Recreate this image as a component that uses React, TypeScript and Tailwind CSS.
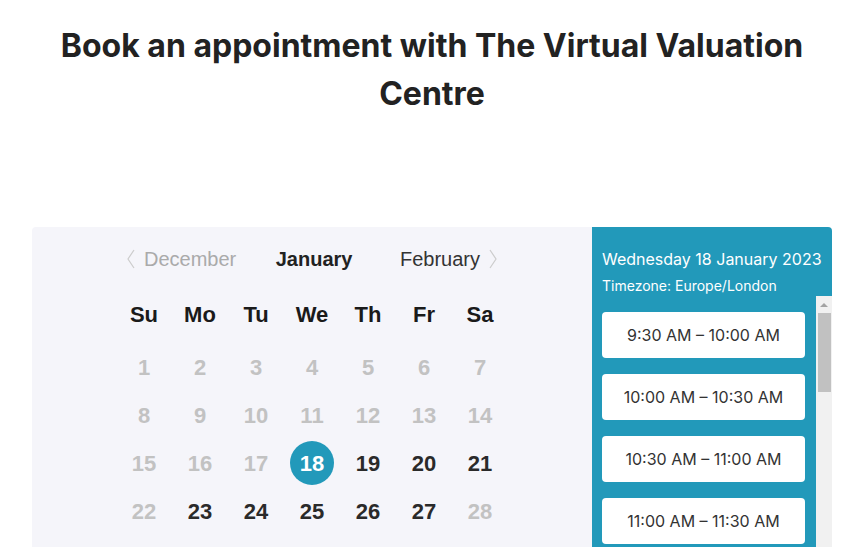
import React from "react";

const weeks: { d: number; muted?: boolean; selected?: boolean }[][] = [
  [1, 2, 3, 4, 5, 6, 7].map((d) => ({ d, muted: true })),
  [8, 9, 10, 11, 12, 13, 14].map((d) => ({ d, muted: true })),
  [
    { d: 15, muted: true },
    { d: 16, muted: true },
    { d: 17, muted: true },
    { d: 18, selected: true },
    { d: 19 },
    { d: 20 },
    { d: 21 },
  ],
  [
    { d: 22, muted: true },
    { d: 23 },
    { d: 24 },
    { d: 25 },
    { d: 26 },
    { d: 27 },
    { d: 28, muted: true },
  ],
];

const dayNames = ["Su", "Mo", "Tu", "We", "Th", "Fr", "Sa"];

const fmt = (mins: number) => {
  const h24 = Math.floor(mins / 60);
  const m = mins % 60;
  const ap = h24 >= 12 ? "PM" : "AM";
  const h = h24 % 12 === 0 ? 12 : h24 % 12;
  return `${h}:${m.toString().padStart(2, "0")} ${ap}`;
};

// 9:30 AM onwards, half hour slots
const slots = Array.from({ length: 4 }, (_, i) => {
  const start = 9 * 60 + 30 + i * 30;
  return `${fmt(start)} – ${fmt(start + 30)}`;
});

const App = () => {
  return (
    <div className="h-screen overflow-hidden bg-white font-['Inter',sans-serif]">
      <h1 className="pt-[22px] px-10 text-center text-[32px] leading-[48px] font-bold text-[#222]">
        Book an appointment with The Virtual Valuation Centre
      </h1>

      <div className="mx-8 mt-[109px] flex rounded-t-[4px] overflow-hidden">
        {/* Calendar */}
        <div className="flex-1 bg-[#f5f5fa] pt-5 font-['Liberation_Sans',Arial,sans-serif] flex flex-col items-center">
          <div className="w-[370px] h-6 flex items-center justify-between text-[20px]">
            <button className="flex items-center gap-[9px] text-[#aaa]">
              <svg width="8" height="20" viewBox="0 0 8 20" fill="none">
                <path d="M7 1L1 10L7 19" stroke="#ccc" strokeWidth="1.2" />
              </svg>
              December
            </button>
            <span className="font-bold text-[#222] pr-2">January</span>
            <button className="flex items-center gap-[9px] text-[#333]">
              February
              <svg width="8" height="20" viewBox="0 0 8 20" fill="none">
                <path d="M1 1L7 10L1 19" stroke="#ccc" strokeWidth="1.2" />
              </svg>
            </button>
          </div>

          <div className="mt-[19px] grid grid-cols-7 w-[392px]">
            {dayNames.map((n) => (
              <div
                key={n}
                className="h-12 flex items-center justify-center text-[22px] font-bold text-[#1a1a1a]"
              >
                {n}
              </div>
            ))}
          </div>

          <div className="mt-[5px] pb-6 grid grid-cols-7 w-[392px]">
            {weeks.flat().map((c, i) => (
              <div key={i} className="h-12 flex items-center justify-center">
                {c.selected ? (
                  <span className="w-11 h-11 rounded-full bg-[#2299ba] text-white flex items-center justify-center text-[22px] font-bold">
                    {c.d}
                  </span>
                ) : (
                  <span
                    className={
                      c.muted
                        ? "text-[22px] font-bold text-[#c2c2c2]"
                        : "text-[22px] font-bold text-[#2a2a2a]"
                    }
                  >
                    {c.d}
                  </span>
                )}
              </div>
            ))}
          </div>
        </div>

        {/* Time slots */}
        <div className="w-[240px] bg-[#2299ba] text-white flex flex-col">
          <div className="px-[10px] pt-[22px]">
            <p className="text-[16px] leading-[20px] whitespace-nowrap">Wednesday 18 January 2023</p>
            <p className="mt-[8px] text-[14px] leading-[18px]">Timezone: Europe/London</p>
          </div>
          <div className="mt-[1px] flex flex-1">
            <div className="flex-1 pl-[10px] pr-[11px] pt-4 flex flex-col gap-4">
              {slots.map((s) => (
                <button
                  key={s}
                  className="shrink-0 h-[46px] rounded-[4px] bg-white text-[#333] text-[16px] flex items-center justify-center"
                >
                  {s}
                </button>
              ))}
            </div>
            {/* scrollbar */}
            <div className="w-4 bg-[#f1f1f1] flex flex-col items-center">
              <div className="h-[17px] flex items-center justify-center">
                <span className="w-0 h-0 border-x-[4px] border-x-transparent border-b-[4px] border-b-[#a3a3a3]" />
              </div>
              <div className="w-[13px] h-[79px] bg-[#c1c1c1]" />
            </div>
          </div>
        </div>
      </div>
    </div>
  );
};

export default App;
